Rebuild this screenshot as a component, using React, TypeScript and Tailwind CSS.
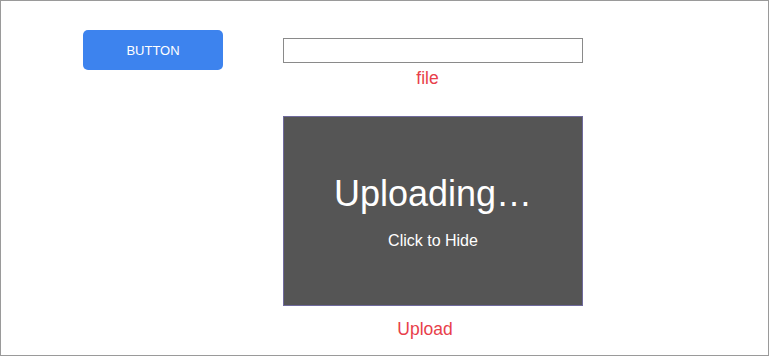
export default function App() {
  return (
    <div
      className="w-[769px] h-[356px] border border-[#9a9a9a] bg-white flex items-start pl-[82px] pt-[29px]"
      style={{ fontFamily: '"Liberation Sans", Arial, sans-serif' }}
    >
      <button className="w-[140px] h-[40px] rounded-[5px] bg-[#3d83ee] text-white text-[13px] leading-none flex items-center justify-center">
        BUTTON
      </button>
      <div className="ml-[60px] mt-[8px] w-[300px] flex flex-col items-center">
        <input
          type="text"
          className="w-[300px] h-[25px] border border-[#8a8a8a] bg-white outline-none"
        />
        <div className="mt-[5px] pr-[11px] text-[17.5px] leading-[20px] text-[#e8404a]">file</div>
        <div className="mt-[28px] w-[300px] h-[190px] border border-[#6f6a9c] bg-[#555555] flex flex-col items-center justify-center text-white">
          <div className="text-[36px] leading-[44px]">Uploading…</div>
          <div className="mt-[15px] text-[16px] leading-[20px]">Click to Hide</div>
        </div>
        <div className="mt-[13px] pr-[16px] text-[17.5px] leading-[20px] text-[#e8404a]">Upload</div>
      </div>
    </div>
  );
}
